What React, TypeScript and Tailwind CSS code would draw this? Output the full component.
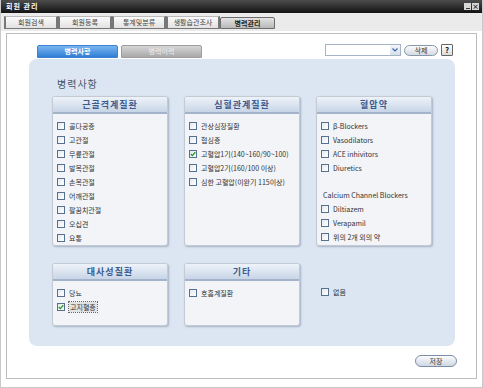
import React from 'react';

const font = { fontFamily: '"Noto Sans CJK KR", "Liberation Sans", sans-serif' };

const topTabs = ['회원검색', '회원등록', '통계및분류', '생활습관조사', '병력관리'];

// One little checkbox, drawn like the old form control
const Check = ({ checked = false }: { checked?: boolean }) => (
  <span className="w-[8px] h-[8px] shrink-0 border border-[#56708f] bg-gradient-to-br from-[#e4e9ef] to-white flex items-center justify-center">
    {checked && (
      <svg width="6" height="6" viewBox="0 0 6 6">
        <path d="M0.8 3 L2.3 4.6 L5.3 1.2" stroke="#1f9a1f" strokeWidth="1.3" fill="none" />
      </svg>
    )}
  </span>
);

const Item = ({ label, checked, focus }: { label: string; checked?: boolean; focus?: boolean }) => (
  <div className="h-[14px] flex items-center gap-[4px] text-[7px] text-[#333]">
    <Check checked={checked} />
    <span className={focus ? 'outline outline-1 outline-dotted outline-[#666] bg-[#e2e2e2] px-[1px]' : ''}>{label}</span>
  </div>
);

const Card = ({ title, size, children }: { title: string; size: string; children?: React.ReactNode }) => (
  <div className={`w-[116px] ${size} rounded-[3px] border border-[#c3cad4] bg-[#f2f4f7] shadow-[1px_1px_2px_rgba(60,80,110,0.35)] overflow-hidden flex flex-col`}>
    <div className="h-[17px] shrink-0 bg-gradient-to-b from-[#eef3f9] to-[#c8d5e7] border-b-2 border-[#a3b3c9] flex items-center justify-center text-[9px] font-bold tracking-[1px] text-[#3c5c90]">
      {title}
    </div>
    <div className="pl-[4px] pt-[5px] flex flex-col">{children}</div>
  </div>
);

export default function App() {
  return (
    <div style={font} className="w-[483px] h-[388px] bg-white border-x border-b border-[#c9c9c9] flex flex-col overflow-hidden">
      {/* title bar */}
      <div className="h-[13px] shrink-0 bg-gradient-to-b from-[#4d4d4d] to-[#141414] flex items-center justify-between pl-[5px] pr-[3px]">
        <span className="text-[7px] font-bold text-white tracking-[1px]">회원 관리</span>
        <div className="flex gap-[1px]">
          <span className="w-[7px] h-[7px] bg-[#d8d8d8] flex items-end justify-center pb-[1px]">
            <span className="w-[4px] h-[1px] bg-[#333]" />
          </span>
          <span className="w-[7px] h-[7px] bg-[#d8d8d8] text-[7px] leading-[7px] text-[#222] text-center font-bold">×</span>
        </div>
      </div>

      {/* tab strip */}
      <div className="h-[18px] shrink-0 bg-[#ebebeb] flex items-end pl-[3px] pb-[2px]">
        {topTabs.map((t, i) =>
          i === 4 ? (
            <div key={t} className="w-[55px] h-[12px] border border-[#6d6d6d] rounded-t-[2px] bg-gradient-to-b from-[#e3e3e3] to-[#b9b9b9] flex items-center justify-center text-[7px] font-bold text-[#222]">
              {t}
            </div>
          ) : (
            <div key={t} className="w-[54px] h-[13px] border-x-2 border-b border-[#777] border-t border-t-[#bbb] bg-gradient-to-b from-[#fbfbfb] to-[#e2e2e2] flex items-center justify-center text-[7px] text-[#444]">
              {t}
            </div>
          )
        )}
      </div>

      {/* content */}
      <div className="flex-1 px-[5px] pt-[2px] pb-[8px] flex">
        <div className="flex-1 border border-[#bdbdbd] bg-white pl-[22px] pr-[21px] pt-[10px] flex flex-col">
          {/* sub tabs and tools */}
          <div className="h-[14px] flex items-start justify-between">
            <div className="flex gap-[3px] pl-[8px] pt-[1px]">
              <div className="w-[81px] h-[13px] rounded-t-[2px] border border-[#3f82d4] bg-gradient-to-b from-[#79b6f0] to-[#2f7fd6] flex items-center justify-center text-[7px] font-bold text-white">
                병력사항
              </div>
              <div className="w-[81px] h-[13px] rounded-t-[2px] border border-[#9e9e9e] bg-gradient-to-b from-[#d6d6d6] to-[#a9a9a9] flex items-center justify-center text-[7px] text-[#eee]">
                병력이력
              </div>
            </div>
            <div className="flex items-center gap-[3px] pr-[2px]">
              <div className="w-[76px] h-[12px] border border-[#a4b4c6] bg-white flex justify-end">
                <span className="w-[10px] h-full bg-gradient-to-b from-[#f3f6fa] to-[#d6e0ec] flex items-center justify-center">
                  <svg width="6" height="4" viewBox="0 0 6 4">
                    <path d="M0.5 0.5 L3 3 L5.5 0.5" stroke="#3d68a8" strokeWidth="1.2" fill="none" />
                  </svg>
                </span>
              </div>
              <div className="w-[34px] h-[11px] rounded-full border border-[#8797ab] bg-gradient-to-b from-[#fafbfc] to-[#d5dbe3] flex items-center justify-center text-[7px] text-[#333]">
                삭제
              </div>
              <div className="w-[12px] h-[12px] border border-[#666] rounded-[1px] bg-gradient-to-b from-white to-[#dcdcdc] flex items-center justify-center text-[8px] font-bold text-[#222] leading-none">
                ?
              </div>
            </div>
          </div>

          {/* panel */}
          <div className="mt-[1px] h-[287px] rounded-[8px] bg-[#dce6f2] pl-[23px] pt-[19px] flex flex-col">
            <div className="h-[12px] text-[10px] leading-[12px] tracking-[1px] text-[#47566b] pl-[5px]">병력사항</div>
            <div className="mt-[6px] grid grid-cols-[116px_116px_116px] gap-x-[16px] gap-y-[17px] items-start">
              <Card title="근골격계질환" size="h-[150px]">
                {['골다공증', '고관절', '무릎관절', '발목관절', '손목관절', '어깨관절', '팔꿈치관절', '오십견', '요통'].map((l) => (
                  <Item key={l} label={l} />
                ))}
              </Card>
              <Card title="심혈관계질환" size="h-[150px]">
                <Item label="관상심장질환" />
                <Item label="협심증" />
                <Item label="고혈압1기(140~160/90~100)" checked />
                <Item label="고혈압2기(160/100 이상)" />
                <Item label="심한 고혈압(이완기 115이상)" />
              </Card>
              <Card title="혈압약" size="h-[150px]">
                <Item label="β-Blockers" />
                <Item label="Vasodilators" />
                <Item label="ACE inhivitors" />
                <Item label="Diuretics" />
                <div className="h-[14px]" />
                <div className="h-[13px] flex items-center text-[7px] text-[#333] pl-[2px]">Calcium Channel Blockers</div>
                <Item label="Diltiazem" />
                <Item label="Verapamil" />
                <Item label="위의 2개 외의 약" />
              </Card>
              <Card title="대사성질환" size="h-[63px]">
                <Item label="당뇨" />
                <Item label="고지혈증" checked focus />
              </Card>
              <Card title="기타" size="h-[63px]">
                <Item label="호흡계질환" />
              </Card>
              <div className="pl-[5px] pt-[22px]">
                <Item label="없음" />
              </div>
            </div>
          </div>

          {/* save */}
          <div className="mt-[9px] flex justify-end -mr-[2px]">
            <div className="w-[42px] h-[12px] rounded-full border border-[#7d8ea5] bg-gradient-to-b from-[#fbfcfd] to-[#cfd8e3] flex items-center justify-center text-[7px] text-[#333]">
              저장
            </div>
          </div>
        </div>
      </div>
    </div>
  );
}
